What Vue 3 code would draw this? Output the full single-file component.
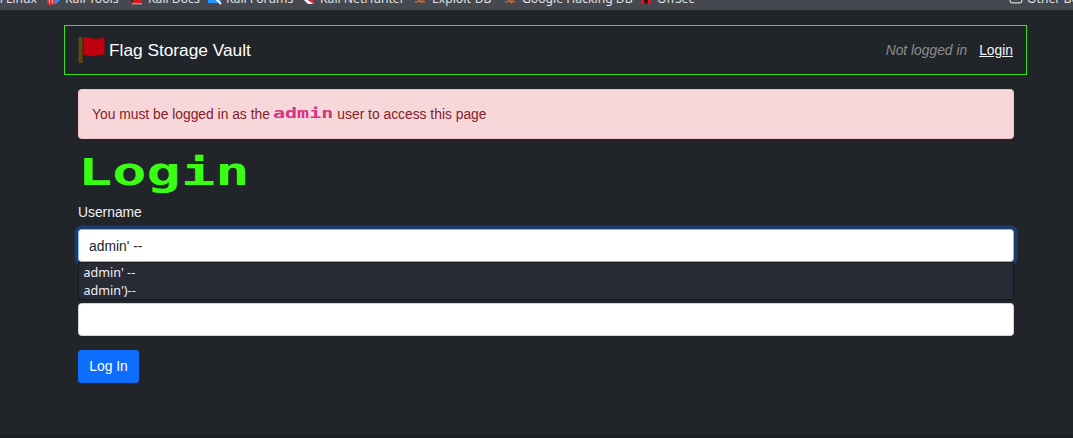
<script setup>
import { ref } from 'vue'

const bookmarks = [
  { name: 'Kali Tools', icon: 'tools', width: 83 },
  { name: 'Kali Docs', icon: 'docs', width: 78 },
  { name: 'Kali Forums', icon: 'forums', width: 94 },
  { name: 'Kali NetHunter', icon: 'hunter', width: 112 },
  { name: 'Exploit-DB', icon: 'bug', width: 90 },
  { name: 'Google Hacking DB', icon: 'bug', width: 135 },
  { name: 'OffSec', icon: 'offsec', width: 70 },
]
const suggestions = ["admin' --", "admin')--"]
const username = ref("admin' --")
const password = ref('')
</script>

<template>
  <div class="screen">
    <div class="bookmarks">
      <div class="first"><span>Kali Linux</span></div>
      <div v-for="b in bookmarks" :key="b.name" class="bookmark" :style="{ width: b.width + 'px' }">
        <svg class="bm-icon" width="14" height="14" viewBox="0 0 14 14">
          <g v-if="b.icon === 'tools'">
            <path d="M6 1h7v8l-4 4H6z" fill="#2a8cff" />
            <path d="M0 6h8v5l-2 3H2l-2-3z" fill="#e8302c" />
            <path d="M2.5 6v6M5.5 6v6" stroke="#f5b5b0" />
          </g>
          <g v-else-if="b.icon === 'docs'">
            <path d="M1 0h11v12H1z" fill="#d8191b" />
            <path d="M1 0h2v11H1z" fill="#252b4b" />
            <path d="M2 12h10v1.5H2z" fill="#99989b" />
          </g>
          <g v-else-if="b.icon === 'forums'">
            <path d="M0 0h13v12H0z" fill="#2496ff" />
            <path d="M4 7l4 1 5 5" fill="none" stroke="#f5f8ff" stroke-width="2" />
          </g>
          <g v-else-if="b.icon === 'hunter'">
            <path d="M0 7l4 1 8 5H6z" fill="#fff" />
            <path d="M5 6l6 7h2L9 6z" fill="#f02348" />
            <path d="M0 8l6 5H4z" fill="#d7234a" />
          </g>
          <g v-else-if="b.icon === 'bug'" fill="none" stroke="#d66423">
            <path d="M4 7l6 2M1 11l5-1 5 1M5 9l3 3" stroke-width="1.6" />
          </g>
          <g v-else>
            <path d="M5 4h4l4 9H1z" fill="#e3171b" />
            <path d="M5 8h4v3H5zM5 13l2-3 2 3" fill="#16191d" />
          </g>
        </svg>
        <span>{{ b.name }}</span>
      </div>
      <div class="other">
        <svg class="bm-icon" width="14" height="14" viewBox="0 0 14 14">
          <path d="M1.2 3v7q0 1.8 1.8 1.8h8q1.8 0 1.8-1.8V5H7L5 3z" fill="none" stroke="#d2d3d6" stroke-width="1.3" />
        </svg>
        <span>Other Bookmarks</span>
      </div>
    </div>

    <nav class="navbar">
      <svg class="flag" width="28" height="28" viewBox="0 0 28 28">
        <path d="M.5 1h4v26h-4z" fill="#664411" />
        <path d="M5.5 1.5Q8 .3 11 1.5t7 1.2 8.5-1.5V19q-4-1-7.5.5t-7 .4-6.5-.4z" fill="#c1000e" />
      </svg>
      <span class="brand">Flag Storage Vault</span>
      <em>Not logged in</em>
      <a>Login</a>
    </nav>

    <main>
      <div class="alert">
        <span>You must be logged in as the</span>
        <code><span>admin</span></code>
        <span>user to access this page</span>
      </div>
      <h1><span>Login</span></h1>
      <label>Username</label>
      <div class="field">
        <input v-model="username" class="focused" type="text">
        <div class="menu">
          <div v-for="s in suggestions" :key="s">{{ s }}</div>
        </div>
      </div>
      <input v-model="password" class="password" type="password">
      <button>Log In</button>
    </main>
  </div>
</template>

<style>
body { background: #212529; overflow: hidden; }
</style>

<style scoped>
.screen {
  box-sizing: border-box;
  width: 1073px;
  height: 438px;
  overflow: hidden;
  background: #212529;
  border-bottom: 4px solid #1c1f23;
  color: #f1f2f3;
  font: 13.83px/20.75px "Liberation Sans", Arial, sans-serif;
}
.bookmarks {
  display: flex;
  height: 10px;
  overflow: hidden;
  background: #45484e;
  border-bottom: 1px solid #272a2f;
  color: #e0e1e3;
  font: 12.2px/18px "Noto Sans", sans-serif;
  white-space: nowrap;
}
.first { display: flex; justify-content: flex-end; flex: none; width: 37px; margin-right: 10px; }
.first span, .bookmark span, .other span { margin-top: -10px; }
.bookmark { display: flex; flex: none; gap: 4px; }
.bm-icon { flex: none; margin-top: -9px; }
.other { display: flex; flex: none; gap: 4px; width: 64px; margin-left: auto; }
.navbar {
  box-sizing: border-box;
  display: flex;
  align-items: center;
  width: 963px;
  height: 50px;
  margin: 14px 0 0 64px;
  padding: 0 13px;
  border: 1px solid #39e31b;
}
.flag { margin-right: 3px; }
.brand { font-size: 17.29px; color: #fff; }
.navbar em { margin-left: auto; color: #8b8d8f; }
.navbar a { margin-left: 12px; text-decoration: underline; }
main { display: flex; flex-direction: column; width: 936px; margin: 14px 0 0 78px; }
.alert {
  box-sizing: border-box;
  display: flex;
  align-items: center;
  height: 50px;
  padding: 0 13px;
  border: 1px solid #f5c2c7;
  border-radius: 3.5px;
  background: #f8d7da;
  color: #842029;
}
.alert code { width: 60px; margin: -3px 4px 0 3.5px; color: #d63384; font: bold 14px/20px "DejaVu Sans Mono", monospace; }
.alert code span { display: block; width: 42px; transform: scaleX(1.43); transform-origin: left; }
h1 {
  height: 63px;
  margin: 0;
  color: #39ff14;
  font: bold 41px/63px "DejaVu Sans Mono", monospace;
}
h1 span { display: block; width: 124px; margin-top: 1px; transform: scale(1.39, .92); transform-origin: 0 46px; }
label { height: 27px; }
.field { position: relative; height: 33px; }
input {
  box-sizing: border-box;
  display: block;
  width: 100%;
  height: 33px;
  padding: 0 10px;
  border: 1px solid #ced4da;
  border-radius: 3.5px;
  outline: 0;
  background: #fff;
  color: #212529;
  font: inherit;
}
.focused { border-color: #86b7fe; box-shadow: 0 0 0 3.4px #1c3d6b; }
.menu {
  position: absolute;
  top: 33px;
  left: 0;
  box-sizing: border-box;
  width: 936px;
  height: 38px;
  padding: 1px 4.5px;
  border: 1px solid #15171c;
  background: #282a36;
  color: #f0f0f2;
  font: 12.6px/17.5px "Noto Sans", sans-serif;
}
.password { margin-top: 41px; }
button {
  width: 61px;
  height: 33px;
  margin-top: 14px;
  padding: 0;
  border: 0;
  border-radius: 3.5px;
  background: #0d6efd;
  color: #fff;
  font: inherit;
}
</style>
